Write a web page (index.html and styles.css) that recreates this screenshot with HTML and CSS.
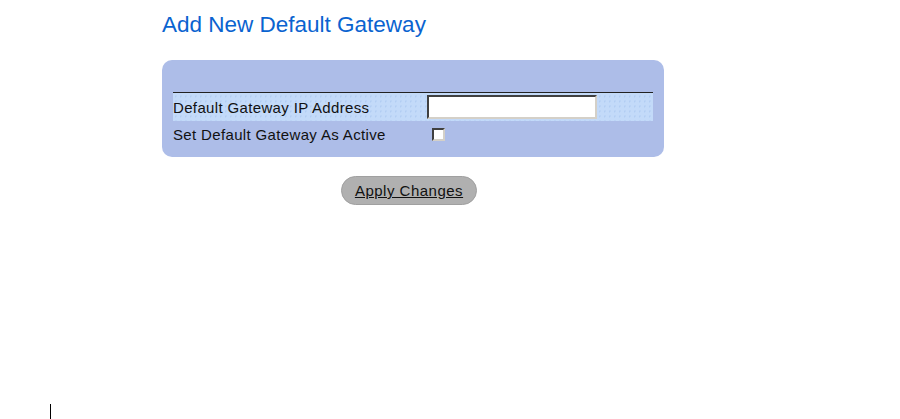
FILE: index.html
```html
<!DOCTYPE html>
<html lang="en">
<head>
  <meta charset="UTF-8">
  <title>Add New Default Gateway</title>
  <link rel="stylesheet" href="styles.css">
</head>
<body>

<div class="page">
  <h2>Add New Default Gateway</h2>

  <div class="panel">
    <table class="form-table">
      <tr class="hl">
        <td class="label">Default Gateway IP Address</td>
        <td><input type="text" class="ip-input"></td>
      </tr>
      <tr>
        <td class="label">Set Default Gateway As Active</td>
        <td><span class="check"></span></td>
      </tr>
    </table>
  </div>

  <div class="actions">
    <button class="apply-btn">Apply Changes</button>
  </div>
</div>

<div class="margin-bar"></div>

</body>
</html>
```

FILE: styles.css
```css
html, body {
  margin: 0;
  padding: 0;
  background: #fff;
  height: 419px;
  overflow: hidden;
}

body {
  font-family: "Liberation Sans", Arial, sans-serif;
  position: relative;
}

.page {
  padding-left: 162px;
  padding-top: 12px;
}

h2 {
  margin: 0;
  font-size: 22.5px;
  font-weight: normal;
  color: #0a63d0;
  line-height: 26px;
}

.panel {
  margin-top: 22px;
  width: 480px;
  height: 65px;
  padding: 32px 11px 0 11px;
  background: #adbde8;
  border-radius: 10px;
}

.form-table {
  width: 480px;
  border-collapse: collapse;
  border-top: 1px solid #222;
  font-size: 15px;
  letter-spacing: 0.35px;
  color: #111;
}

.form-table td {
  padding: 0;
  height: 26px;
  vertical-align: middle;
}

.form-table tr.hl td {
  height: 28px;
  background-color: #c3daf9;
  background-image: radial-gradient(#b2cdf3 1px, transparent 1px);
  background-size: 5px 5px;
}

.label {
  width: 254px;
}

.ip-input {
  display: block;
  box-sizing: border-box;
  width: 170px;
  height: 24px;
  margin: 0;
  padding: 0;
  background: #fff;
  border: 2px solid;
  border-color: #404040 #d4d0c8 #d4d0c8 #404040;
}

.check {
  display: block;
  box-sizing: border-box;
  width: 13px;
  height: 13px;
  margin-left: 5px;
  background: #fff;
  border: 2px solid;
  border-color: #404040 #d4d0c8 #d4d0c8 #404040;
}

.actions {
  padding-left: 179px;
  margin-top: 19px;
}

.apply-btn {
  width: 136px;
  height: 29px;
  background: #b0b0b0;
  border: 1px solid #a0a0a0;
  border-radius: 15px;
  font-family: "Liberation Sans", Arial, sans-serif;
  font-size: 15px;
  letter-spacing: 0.5px;
  color: #111;
  text-decoration: underline;
  padding: 0;
}

.margin-bar {
  position: absolute;
  left: 50px;
  top: 404px;
  width: 1px;
  height: 15px;
  background: #000;
}
```
